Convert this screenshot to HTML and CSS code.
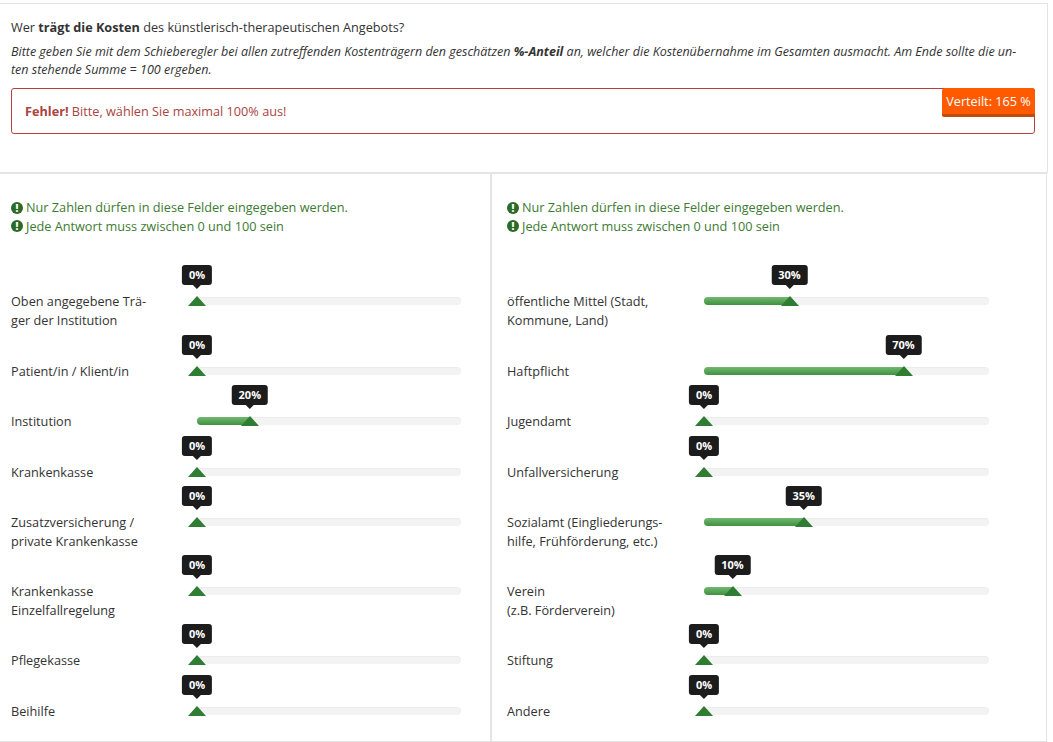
FILE: index.html
```html
<!DOCTYPE html>
<html lang="de">
<head>
<meta charset="utf-8">
<link rel="stylesheet" href="styles.css">
</head>
<body>
<div class="page">
  <section class="top">
    <p class="question">Wer <b>trägt die Kosten</b> des künstlerisch-therapeutischen Angebots?</p>
    <p class="help">Bitte geben Sie mit dem Schieberegler bei allen zutreffenden Kostenträgern den geschätzen <b>%-Anteil</b> an, welcher die Kostenübernahme im Gesamten ausmacht. Am Ende sollte die un-<br>ten stehende Summe = 100 ergeben.</p>
    <div class="error">
      <b>Fehler!</b> Bitte, wählen Sie maximal 100% aus!
      <span class="badge">Verteilt: 165 %</span>
    </div>
  </section>
  <div class="cols">
    <section class="col col-left">
      <div class="hints">
        <div class="hint"><span class="ico">!</span>Nur Zahlen dürfen in diese Felder eingegeben werden.</div>
        <div class="hint"><span class="ico">!</span>Jede Antwort muss zwischen 0 und 100 sein</div>
      </div>
      <div class="row"><div class="label">Oben angegebene Trä-<br>ger der Institution</div><div class="slider"><div class="track"><span class="tip" style="left:0%">0%</span><span class="handle" style="left:0%"></span></div></div></div>
      <div class="row"><div class="label">Patient/in / Klient/in</div><div class="slider"><div class="track"><span class="tip" style="left:0%">0%</span><span class="handle" style="left:0%"></span></div></div></div>
      <div class="row"><div class="label">Institution</div><div class="slider"><div class="track"><span class="fill" style="width:20%"></span><span class="tip" style="left:20%">20%</span><span class="handle" style="left:20%"></span></div></div></div>
      <div class="row"><div class="label">Krankenkasse</div><div class="slider"><div class="track"><span class="tip" style="left:0%">0%</span><span class="handle" style="left:0%"></span></div></div></div>
      <div class="row"><div class="label">Zusatzversicherung /<br>private Krankenkasse</div><div class="slider"><div class="track"><span class="tip" style="left:0%">0%</span><span class="handle" style="left:0%"></span></div></div></div>
      <div class="row"><div class="label">Krankenkasse<br>Einzelfallregelung</div><div class="slider"><div class="track"><span class="tip" style="left:0%">0%</span><span class="handle" style="left:0%"></span></div></div></div>
      <div class="row"><div class="label">Pflegekasse</div><div class="slider"><div class="track"><span class="tip" style="left:0%">0%</span><span class="handle" style="left:0%"></span></div></div></div>
      <div class="row"><div class="label">Beihilfe</div><div class="slider"><div class="track"><span class="tip" style="left:0%">0%</span><span class="handle" style="left:0%"></span></div></div></div>
    </section>
    <section class="col col-right">
      <div class="hints">
        <div class="hint"><span class="ico">!</span>Nur Zahlen dürfen in diese Felder eingegeben werden.</div>
        <div class="hint"><span class="ico">!</span>Jede Antwort muss zwischen 0 und 100 sein</div>
      </div>
      <div class="row"><div class="label">öffentliche Mittel (Stadt,<br>Kommune, Land)</div><div class="slider"><div class="track"><span class="fill" style="width:30%"></span><span class="tip" style="left:30%">30%</span><span class="handle" style="left:30%"></span></div></div></div>
      <div class="row"><div class="label">Haftpflicht</div><div class="slider"><div class="track"><span class="fill" style="width:70%"></span><span class="tip" style="left:70%">70%</span><span class="handle" style="left:70%"></span></div></div></div>
      <div class="row"><div class="label">Jugendamt</div><div class="slider"><div class="track"><span class="tip" style="left:0%">0%</span><span class="handle" style="left:0%"></span></div></div></div>
      <div class="row"><div class="label">Unfallversicherung</div><div class="slider"><div class="track"><span class="tip" style="left:0%">0%</span><span class="handle" style="left:0%"></span></div></div></div>
      <div class="row"><div class="label">Sozialamt (Eingliederungs-<br>hilfe, Frühförderung, etc.)</div><div class="slider"><div class="track"><span class="fill" style="width:35%"></span><span class="tip" style="left:35%">35%</span><span class="handle" style="left:35%"></span></div></div></div>
      <div class="row"><div class="label">Verein<br>(z.B. Förderverein)</div><div class="slider"><div class="track"><span class="fill" style="width:10%"></span><span class="tip" style="left:10%">10%</span><span class="handle" style="left:10%"></span></div></div></div>
      <div class="row"><div class="label">Stiftung</div><div class="slider"><div class="track"><span class="tip" style="left:0%">0%</span><span class="handle" style="left:0%"></span></div></div></div>
      <div class="row"><div class="label">Andere</div><div class="slider"><div class="track"><span class="tip" style="left:0%">0%</span><span class="handle" style="left:0%"></span></div></div></div>
    </section>
  </div>
</div>
</body>
</html>
```
FILE: styles.css
```css
html, body {
  margin: 0;
  padding: 0;
  background: #fff;
}
body {
  font-family: "Open Sans", "Noto Sans", sans-serif;
  font-size: 12.7px;
  line-height: 18.57px;
  color: #333;
}
.page {
  width: 1048px;
  padding-top: 3px;
}
.top {
  border: 1px solid #e4e4e4;
  border-left: none;
  padding: 14px 12px 38px 11px;
}
.question {
  margin: 0 0 6px;
}
.help {
  margin: 0 0 8px;
  font-style: italic;
  font-size: 12.5px;
  white-space: nowrap;
}
.error {
  position: relative;
  border: 1px solid #b5403e;
  border-radius: 3px;
  padding: 13px 13px;
  color: #a94442;
}
.error b {
  font-weight: 700;
}
.badge {
  position: absolute;
  top: -1px;
  right: -1px;
  width: 93px;
  height: 29px;
  box-sizing: border-box;
  background: #ff5a00;
  border-bottom: 3px solid #c04a10;
  border-radius: 3px 3px 2px 2px;
  color: #fff;
  text-align: center;
  line-height: 26px;
  font-size: 12.7px;
}
.cols {
  display: flex;
}
.col {
  border: 1px solid #e4e4e4;
  padding-top: 24px;
  padding-bottom: 20px;
}
.col-left {
  border-left: none;
  width: 479px;
  padding-left: 11px;
}
.col-right {
  width: 539px;
  padding-left: 15px;
}
.hints {
  color: #3d7a32;
  margin-bottom: 25px;
}
.hint {
  display: flex;
  align-items: center;
}
.ico {
  display: inline-block;
  width: 12px;
  height: 12px;
  border-radius: 50%;
  background: #2b6a27;
  color: #fff;
  font-size: 10px;
  font-weight: 800;
  line-height: 12px;
  text-align: center;
  margin-right: 3px;
}
.row {
  display: grid;
  padding-top: 32px;
}
.col-left .row {
  grid-template-columns: 177px 282px;
}
.col-right .row {
  grid-template-columns: 188px 303px;
}
.slider {
  padding: 5px 9px 0;
}
.track {
  position: relative;
  height: 8px;
  background: #f3f3f3;
  border-radius: 4px;
  box-shadow: inset 0 1px 1px rgba(0, 0, 0, 0.03);
}
.fill {
  position: absolute;
  left: 0;
  top: 0;
  height: 8px;
  border-radius: 4px 0 0 4px;
  background: linear-gradient(#72b872, #3f923f);
}
.handle {
  position: absolute;
  bottom: -1px;
  width: 0;
  height: 0;
  margin-left: -9px;
  border-left: 9px solid transparent;
  border-right: 9px solid transparent;
  border-bottom: 10px solid #2e7d32;
}
.tip {
  position: absolute;
  bottom: 20px;
  transform: translateX(-50%);
  background: #1c1c1c;
  color: #fff;
  font-size: 11px;
  font-weight: 700;
  line-height: 20px;
  height: 20px;
  padding: 0 7px;
  border-radius: 3px;
  white-space: nowrap;
}
.tip::after {
  content: "";
  position: absolute;
  left: 50%;
  top: 100%;
  margin-left: -4px;
  border-left: 4px solid transparent;
  border-right: 4px solid transparent;
  border-top: 4px solid #1c1c1c;
}
```
